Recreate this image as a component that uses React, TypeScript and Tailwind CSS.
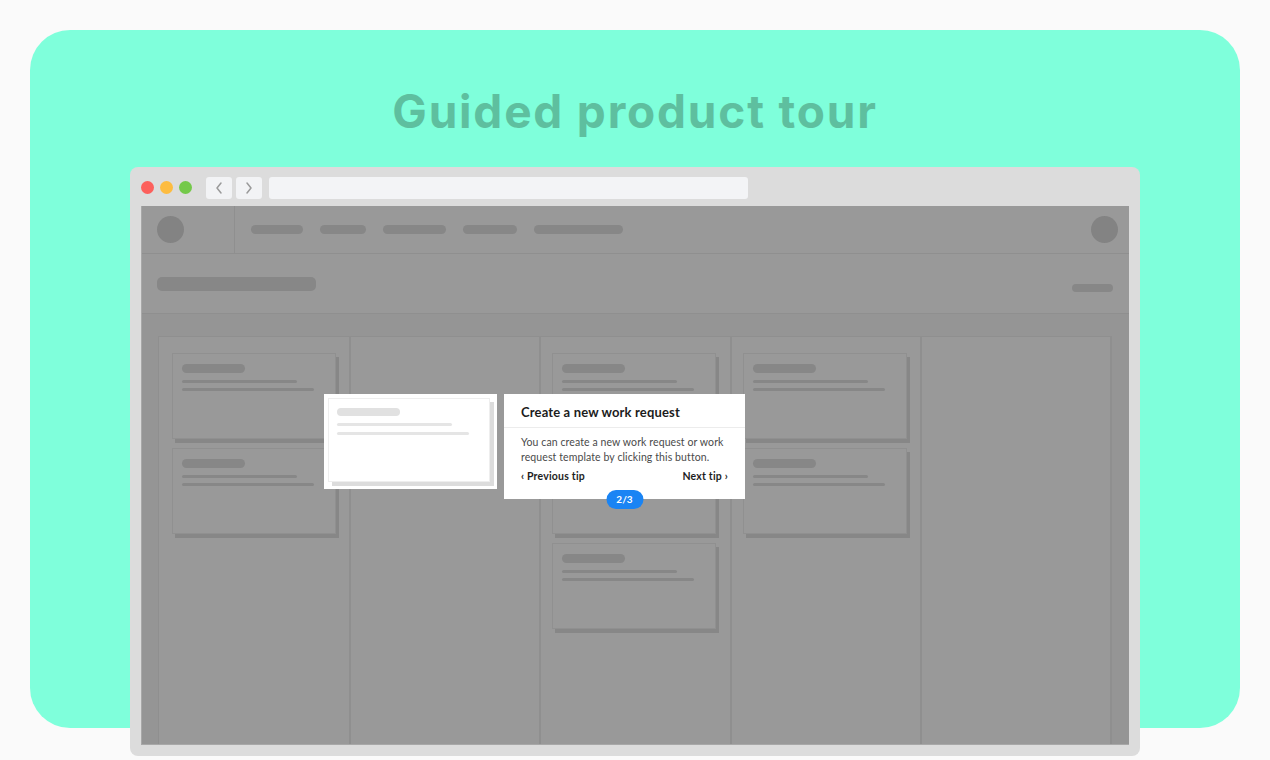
import React from "react";

function Card({ pad = "" }: { pad?: string }) {
  return (
    <div className={`w-[164px] h-[86px] border border-[#909090] bg-[#999999] shadow-[3px_4px_0_#878787] pt-[10px] pl-[9px] ${pad}`}>
      <div className="w-[63px] h-[9px] rounded-full bg-[#878787]" />
      <div className="mt-[7px] w-[115px] h-[3px] rounded-full bg-[#878787]" />
      <div className="mt-[5px] w-[132px] h-[3px] rounded-full bg-[#878787]" />
    </div>
  );
}

function Column({ count, className = "" }: { count: number; className?: string }) {
  return (
    <div className={`flex-1 border-r-2 border-[#8f8f8f] bg-[#999999] flex flex-col gap-[9px] pt-[16px] ${className}`}>
      {Array.from({ length: count }).map((_, i) => (
        <Card key={i} />
      ))}
    </div>
  );
}

function Chevron({ dir }: { dir: "l" | "r" }) {
  return (
    <svg width="10" height="14" viewBox="0 0 10 14" fill="none">
      <polyline
        points={dir === "l" ? "7,2 3,7 7,12" : "3,2 7,7 3,12"}
        stroke="#9a9a9a"
        strokeWidth="1.5"
        strokeLinecap="round"
        strokeLinejoin="round"
      />
    </svg>
  );
}

export default function App() {
  return (
    <div className="w-[1270px] h-[760px] bg-[#fafafa] overflow-hidden pt-[30px] pl-[30px]">
      <div className="w-[1210px] h-[698px] rounded-[40px] bg-[#7fffdb] flex flex-col">
        <h1 className="pt-[53px] h-[137px] shrink-0 leading-[56px] text-center text-[46px] font-bold text-[#5ebf9f] font-['Inter',sans-serif] tracking-[1.8px]">
          Guided product tour
        </h1>
        <div className="ml-[100px] w-[1010px] h-[589px] shrink-0 rounded-[8px] bg-[#dcdcdc] flex flex-col">
          {/* chrome bar */}
          <div className="h-[39px] flex items-center pl-[11px] pt-[2px]">
            <div className="flex gap-[6px]">
              <div className="w-[13px] h-[13px] rounded-full bg-[#fc605c]" />
              <div className="w-[13px] h-[13px] rounded-full bg-[#fdbc40]" />
              <div className="w-[13px] h-[13px] rounded-full bg-[#74c94a]" />
            </div>
            <div className="ml-[14px] w-[26px] h-[22px] rounded-[3px] bg-[#f2f3f5] flex items-center justify-center">
              <Chevron dir="l" />
            </div>
            <div className="ml-[4px] w-[26px] h-[22px] rounded-[3px] bg-[#f2f3f5] flex items-center justify-center">
              <Chevron dir="r" />
            </div>
            <div className="ml-[7px] w-[479px] h-[22px] rounded-[3px] bg-[#f3f4f6]" />
          </div>
          {/* content */}
          <div className="relative mx-[11px] h-[539px] bg-[#959595] border-l border-b border-[#a8a8a8] flex flex-col">
            {/* top nav */}
            <div className="h-[48px] shrink-0 flex items-center bg-[#999999] border-b border-[#8f8f8f]">
              <div className="w-[93px] h-full border-r border-[#8f8f8f] flex items-center pl-[15px]">
                <div className="w-[27px] h-[27px] rounded-full bg-[#838383]" />
              </div>
              <div className="flex items-center gap-[17px] pl-[16px]">
                <div className="w-[52px] h-[9px] rounded-full bg-[#878787]" />
                <div className="w-[46px] h-[9px] rounded-full bg-[#878787]" />
                <div className="w-[63px] h-[9px] rounded-full bg-[#878787]" />
                <div className="w-[54px] h-[9px] rounded-full bg-[#878787]" />
                <div className="w-[89px] h-[9px] rounded-full bg-[#878787]" />
              </div>
              <div className="ml-auto mr-[11px] w-[27px] h-[27px] rounded-full bg-[#838383]" />
            </div>
            {/* page header */}
            <div className="h-[60px] shrink-0 flex items-center justify-between pl-[15px] pr-[16px] bg-[#999999] border-b border-[#8f8f8f]">
              <div className="w-[159px] h-[14px] rounded-[5px] bg-[#878787]" />
              <div className="mt-[9px] w-[41px] h-[8px] rounded-full bg-[#878787]" />
            </div>
            {/* board */}
            <div className="flex-1 pt-[22px] pl-[16px] pr-[17px] flex">
              <div className="flex-1 flex border-l border-t border-[#8f8f8f]">
                <Column count={2} className="pl-[13px]" />
                <Column count={0} className="pl-[11px]" />
                <Column count={3} className="pl-[11px]" />
                <Column count={2} className="pl-[11px]" />
                <Column count={0} className="pl-[11px]" />
              </div>
            </div>

            {/* highlighted card (spotlight) */}
            <div className="absolute left-[182px] top-[188px] w-[173px] h-[95px] bg-white p-[4px]">
              <div className="w-[162px] h-[84px] bg-white border border-[#eeeeee] shadow-[4px_4px_0_#dcdcdc] pt-[9px] pl-[8px]">
                <div className="w-[63px] h-[8px] rounded-full bg-[#e1e1e1]" />
                <div className="mt-[7px] w-[115px] h-[3px] rounded-full bg-[#e5e5e5]" />
                <div className="mt-[6px] w-[132px] h-[3px] rounded-full bg-[#e5e5e5]" />
              </div>
            </div>

            {/* tooltip */}
            <div className="absolute left-[362px] top-[188px] w-[241px] h-[105px] bg-white font-['Lato',sans-serif]">
              <div className="h-[34px] border-b border-[#ececec] flex items-center pl-[17px] pt-[4px]">
                <span className="text-[13px] font-bold text-[#1c1c1c] tracking-[0.15px]">Create a new work request</span>
              </div>
              <div className="pl-[17px] pr-[14px] pt-[7px] text-[10.5px] leading-[15px] text-[#4a4a4a] tracking-[0.1px]">
                You can create a new work request or work request template by clicking this button.
              </div>
              <div className="mt-[4px] pl-[17px] pr-[17px] flex justify-between text-[10.5px] font-bold text-[#1e1e1e] tracking-[0.2px]">
                <span>‹ Previous tip</span>
                <span>Next tip ›</span>
              </div>
              <div className="absolute left-1/2 -translate-x-1/2 top-[96px] w-[37px] h-[19px] rounded-full bg-[#1a84f4] flex items-center justify-center text-[10px] font-bold text-white">
                2/3
              </div>
            </div>
          </div>
        </div>
      </div>
    </div>
  );
}
